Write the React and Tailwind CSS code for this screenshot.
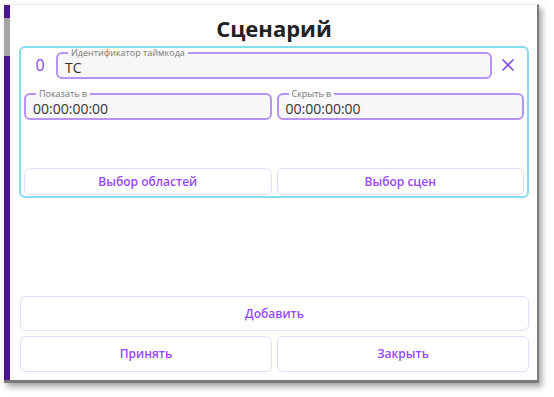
import React from 'react';

const Field = ({ label, value, className = '', valueClass = '' }) => (
  <fieldset className={`h-[31px] rounded-md border-2 border-[#b893f4] bg-[#f7f7f7] px-[7px] ${className}`}>
    <legend className="ml-[3px] px-[3px] text-[9px] leading-[9px] text-[#777]">{label}</legend>
    <div className={`mt-[4px] text-[14px] leading-[14px] text-[#333] ${valueClass}`}>{value}</div>
  </fieldset>
);

const SoftButton = ({ children, className = '' }) => (
  <button className={`flex-1 rounded-md border-[1.5px] border-[#e6d9fd] bg-white text-[12px] font-semibold text-[#9747ff] ${className}`}>
    {children}
  </button>
);

export default function App() {
  return (
    <div className="h-[397px] w-[554px] bg-white" style={{ fontFamily: '"Open Sans", "Noto Sans", sans-serif' }}>
      <div className="ml-[4px] mt-[4px] flex h-[379px] w-[535px] border-b-[3px] border-r-[2px] border-t border-[#7a7a7a] border-t-[#ececec] shadow-[3px_4px_6px_rgba(0,0,0,0.35)]">
        {/* left accent bar with scrollbar thumb */}
        <div className="flex w-[6px] flex-col bg-[#4a1491]">
          <div className="mt-[13px] h-[38px] bg-[#a5a5a5]" />
        </div>

        <div className="flex flex-1 flex-col bg-white pb-[8px] pl-[9px] pr-[8px]">
          <h1 className="flex h-[41px] items-center justify-center pt-[6px] text-[22px] font-bold text-[#222]">Сценарий</h1>

          {/* scene card */}
          <div className="flex h-[152px] flex-col rounded-md border-2 border-[#86dbee] px-[3px] pb-[1px]">
            <div className="flex items-center">
              <div className="w-[32px] pt-[2px] text-center text-[16px] text-[#8b42f5]">0</div>
              <Field label="Идентификатор таймкода" value="TC" className="flex-1" valueClass="font-medium" />
              <div className="flex w-[32px] justify-center pt-[3px] text-[#8a4ee8]">
                <svg width="12" height="12" viewBox="0 0 12 12" fill="none" stroke="currentColor" strokeWidth="1.7" strokeLinecap="round">
                  <path d="M1 1 11 11M11 1 1 11" />
                </svg>
              </div>
            </div>

            <div className="mt-[10px] flex gap-[5px]">
              <Field label="Показать в" value="00:00:00:00" className="flex-1" />
              <Field label="Скрыть в" value="00:00:00:00" className="flex-1" />
            </div>

            <div className="flex-1" />

            <div className="flex h-[27px] gap-[5px]">
              <SoftButton>Выбор областей</SoftButton>
              <SoftButton>Выбор сцен</SoftButton>
            </div>
          </div>

          <div className="flex-1" />

          <div className="flex flex-col gap-[5px] pl-[1px]">
            <div className="flex h-[35px]">
              <SoftButton>Добавить</SoftButton>
            </div>
            <div className="flex h-[36px] gap-[5px]">
              <SoftButton>Принять</SoftButton>
              <SoftButton>Закрыть</SoftButton>
            </div>
          </div>
        </div>
      </div>
    </div>
  );
}
